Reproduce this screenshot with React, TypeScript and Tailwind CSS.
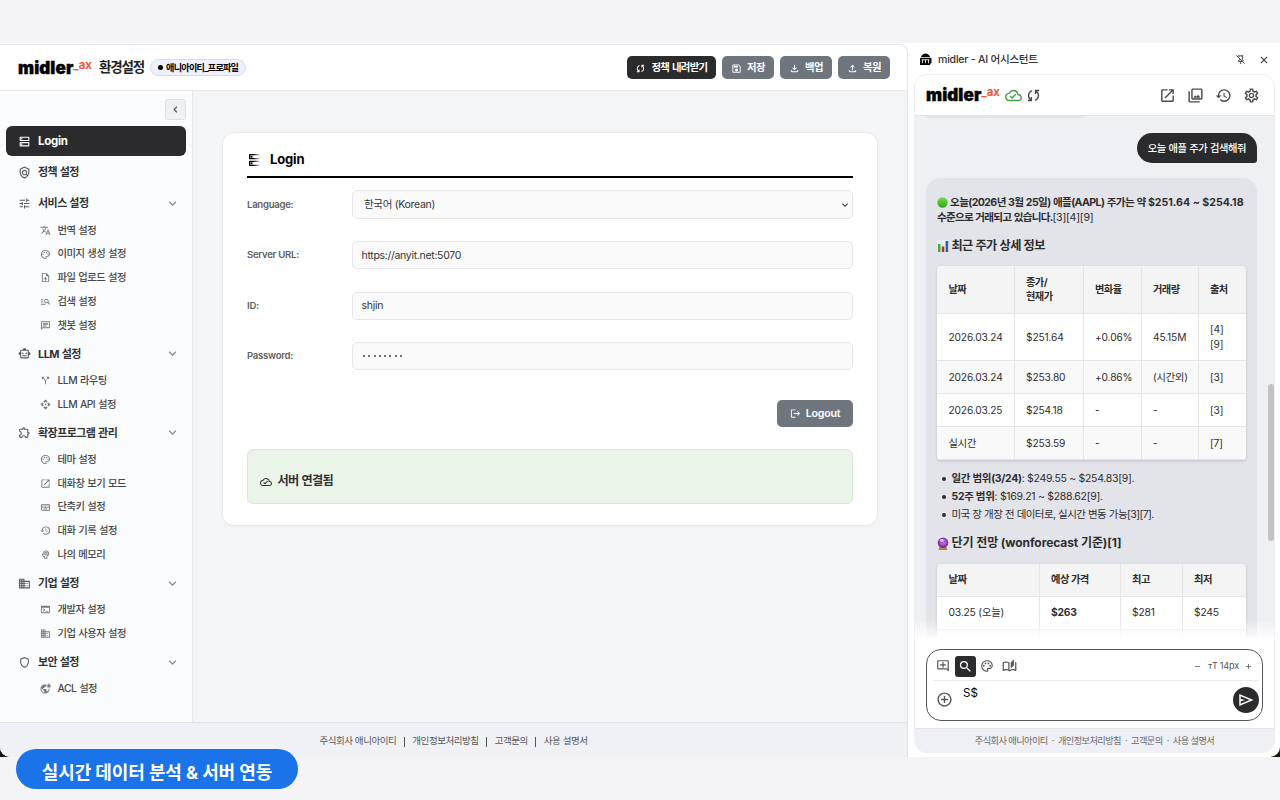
import type { ComponentType, ReactNode } from "react"
import type { IconType } from "react-icons"
import {
  MdAdd,
  MdAddCircleOutline,
  MdCallSplit,
  MdChevronLeft,
  MdClose,
  MdExpandMore,
  MdHistory,
  MdLogout,
  MdOpenInNew,
  MdOutlineAddComment,
  MdOutlineApi,
  MdOutlineAutoStories,
  MdOutlineBusiness,
  MdOutlineChat,
  MdOutlineCloudDone,
  MdOutlineCollections,
  MdOutlineDns,
  MdOutlineExtension,
  MdOutlineFileDownload,
  MdOutlineFileUpload,
  MdOutlineKeyboard,
  MdOutlineManageSearch,
  MdOutlineNoteAdd,
  MdOutlinePalette,
  MdOutlinePolicy,
  MdOutlinePsychology,
  MdOutlineSave,
  MdOutlineSettings,
  MdOutlineShield,
  MdOutlineSmartToy,
  MdOutlineTerminal,
  MdOutlineVpnLock,
  MdRemove,
  MdSearch,
  MdTranslate,
  MdTune,
} from "react-icons/md"

type Glyph = IconType | ComponentType<{ className?: string }>

function SyncIcon({ className }: { className?: string }) {
  return (
    <svg viewBox="0 -960 960 960" fill="currentColor" className={className}>
      <path d="M160-160v-80h110l-16-14q-52-46-73-105t-21-119q0-111 66.5-197.5T400-790v84q-72 26-116 88.5T240-478q0 45 17 87.5t53 78.5l10 10v-98h80v240H160Zm400-10v-84q72-26 116-88.5T720-482q0-45-17-87.5T650-648l-10-10v98h-80v-240h240v80H690l16 14q49 49 71.5 106.5T800-482q0 111-66.5 197.5T560-170Z" />
    </svg>
  )
}

function SendIcon({ className }: { className?: string }) {
  return (
    <svg viewBox="0 -960 960 960" fill="currentColor" className={className}>
      <path d="M120-160v-640l760 320-760 320Zm80-120 474-200-474-200v140l240 60-240 60v140Z" />
    </svg>
  )
}

function PinOffIcon({ className }: { className?: string }) {
  return (
    <svg viewBox="0 0 24 24" fill="none" stroke="currentColor" strokeWidth="2" className={className}>
      <path d="M7 4h11M9 4v2M16 4v8l2 3v1M10 10v2l-3 4h9M12.5 16v6M3 3l18 18" />
    </svg>
  )
}

function AppIcon({ className }: { className?: string }) {
  return (
    <svg viewBox="0 0 24 24" className={className}>
      <path d="M3 8C5 3.500 8.500 1 12 1s7 2.500 9 7z" fill="#000" />
      <path d="M2 9h21v8l-3 5H2z" fill="#000" />
      <path d="M5 12.500h14" stroke="#fff" strokeWidth="1.500" />
      <path d="M6.500 12v7M12 12v7M17.500 12v7" stroke="#fff" strokeWidth="1.500" />
    </svg>
  )
}

function GreenDot() {
  return (
    <svg viewBox="0 0 12 12" className="mr-[2px] inline-block size-[11px] align-[-1.5px]">
      <defs>
        <linearGradient id="dot" x1="0" y1="0" x2="0" y2="1">
          <stop offset="0" stopColor="#6fdc4b" />
          <stop offset="1" stopColor="#35a51b" />
        </linearGradient>
      </defs>
      <circle cx="6" cy="6" r="5.600" fill="url(#dot)" />
    </svg>
  )
}

function BarsEmoji() {
  return (
    <svg viewBox="0 0 12 12" className="size-3 shrink-0">
      <path d="M0 0h12v12H0z" fill="#e4edf2" />
      <path d="M1 4h2.500v8H1z" fill="#3fae35" />
      <path d="M4.800 6.500h2.500V12H4.800z" fill="#c8281e" />
      <path d="M8.600 1h2.600v11H8.600z" fill="#2461c4" />
    </svg>
  )
}

function CrystalBall() {
  return (
    <svg viewBox="0 0 12 13" className="h-[13px] w-3 shrink-0">
      <path d="M2.500 10h7l1 3h-9z" fill="#b9802f" />
      <circle cx="6" cy="5.700" r="5.300" fill="#7c35a3" />
      <circle cx="6" cy="5" r="3.600" fill="#a858c9" />
      <ellipse cx="4.800" cy="3.500" rx="2" ry="1.400" fill="#e3b6f0" />
      <path d="M6 6.500c1-.8 2-.4 2.500.5" stroke="#d88fe8" strokeWidth=".7" fill="none" />
    </svg>
  )
}

const menu: { label: string; icon: Glyph; items: { label: string; icon: Glyph }[] }[] = [
  {
    label: "서비스 설정",
    icon: MdTune,
    items: [
      { label: "번역 설정", icon: MdTranslate },
      { label: "이미지 생성 설정", icon: MdOutlinePalette },
      { label: "파일 업로드 설정", icon: MdOutlineNoteAdd },
      { label: "검색 설정", icon: MdOutlineManageSearch },
      { label: "챗봇 설정", icon: MdOutlineChat },
    ],
  },
  {
    label: "LLM 설정",
    icon: MdOutlineSmartToy,
    items: [
      { label: "LLM 라우팅", icon: MdCallSplit },
      { label: "LLM API 설정", icon: MdOutlineApi },
    ],
  },
  {
    label: "확장프로그램 관리",
    icon: MdOutlineExtension,
    items: [
      { label: "테마 설정", icon: MdOutlinePalette },
      { label: "대화창 보기 모드", icon: MdOpenInNew },
      { label: "단축키 설정", icon: MdOutlineKeyboard },
      { label: "대화 기록 설정", icon: MdHistory },
      { label: "나의 메모리", icon: MdOutlinePsychology },
    ],
  },
  {
    label: "기업 설정",
    icon: MdOutlineBusiness,
    items: [
      { label: "개발자 설정", icon: MdOutlineTerminal },
      { label: "기업 사용자 설정", icon: MdOutlineBusiness },
    ],
  },
  {
    label: "보안 설정",
    icon: MdOutlineShield,
    items: [{ label: "ACL 설정", icon: MdOutlineVpnLock }],
  },
]

const headerButtons = [
  { label: "정책 내려받기", icon: SyncIcon, className: "w-[89px] bg-[#2b2b2d]" },
  { label: "저장", icon: MdOutlineSave, className: "w-[52px] bg-[#6f757d]" },
  { label: "백업", icon: MdOutlineFileDownload, className: "w-[52px] bg-[#6f757d]" },
  { label: "복원", icon: MdOutlineFileUpload, className: "w-[52px] bg-[#6f757d]" },
]

const priceRows = [
  { cells: ["2026.03.24", "$251.64", "+0.06%", "45.15M", "[4] [9]"], className: "h-[47.5px] bg-white" },
  { cells: ["2026.03.24", "$253.80", "+0.86%", "(시간외)", "[3]"], className: "h-[33px] bg-[#f9f9f9]" },
  { cells: ["2026.03.25", "$254.18", "-", "-", "[3]"], className: "h-[33px] bg-white" },
  { cells: ["실시간", "$253.59", "-", "-", "[7]"], className: "h-[33px] bg-[#f9f9f9]" },
]

const links = ["주식회사 애니아이티", "개인정보처리방침", "고객문의", "사용 설명서"]

function Logo() {
  return (
    <div className="flex items-start pt-px text-black">
      <span className="text-[17px] leading-[23px] font-black tracking-[0.1px] [-webkit-text-stroke:0.4px_black]">midler</span>
      <span className="text-[11.500px] leading-[17px] font-semibold text-[#f0563a] [-webkit-text-stroke:0.2px_#f0563a]">_ax</span>
    </div>
  )
}

function Sidebar() {
  return (
    <aside className="w-[193px] shrink-0 border-r border-[#e6e8eb] bg-[#fbfcfe] px-1.5 pt-2">
      <div className="flex justify-end">
        <button className="flex h-[21px] w-[21px] items-center justify-center rounded-[3px] border border-[#dfe1e5] bg-[#f0f1f4] text-[#444]">
          <MdChevronLeft className="size-[13px]" />
        </button>
      </div>
      <nav className="mt-1.5 text-[11px] tracking-[-0.55px] [word-spacing:0.6px] text-[#333]">
        <div className="flex h-[30px] items-center rounded-md bg-[#2b2b2d] pl-3 font-bold text-white">
          <MdOutlineDns className="mr-[7px] size-[13px]" />
          <span className="pt-0.5 text-[11.500px] tracking-[-0.3px]">Login</span>
        </div>
        <div className="mt-0.5 flex h-[29px] items-center pl-3 font-bold">
          <MdOutlinePolicy className="mr-[7px] size-[13px] text-[#5c5c5c]" />
          정책 설정
        </div>
        {menu.map(({ label, icon: Icon, items }) => (
          <div key={label} className="mt-0.5">
            <div className="flex h-[29px] items-center pr-[6px] pl-3 font-bold">
              <Icon className="mr-[7px] size-[13px] text-[#5c5c5c]" />
              {label}
              <MdExpandMore className="ml-auto size-[15px] text-[#888]" />
            </div>
            <div className="pt-[0.5px] text-[10.3px] font-medium tracking-[-0.5px] text-[#484848]">
              {items.map(({ label: text, icon: ItemIcon }) => (
                <div key={text} className="flex h-[23.75px] items-center pl-[34px]">
                  <ItemIcon className="mr-[6.500px] size-[11px] text-[#7a7a7a]" />
                  {text}
                </div>
              ))}
            </div>
          </div>
        ))}
      </nav>
    </aside>
  )
}

function Field({ label, className, children }: { label: string; className: string; children: ReactNode }) {
  return (
    <div className="flex items-center">
      <label className="w-[105px] pt-px text-[9.600px] font-semibold tracking-[-0.28px] text-[#606060]">{label}</label>
      <div className={`flex flex-1 items-center rounded-[5px] border border-[#e6e6e6] bg-[#fafafa] text-[10.500px] tracking-[-0.3px] text-[#333] ${className}`}>
        {children}
      </div>
    </div>
  )
}

function LoginCard() {
  return (
    <section className="h-[394px] w-[656px] rounded-xl border border-[#e7e9ec] bg-white px-6 shadow-[0_1px_3px_rgba(0,0,0,0.03)]">
      <h2 className="flex h-[45px] items-center border-b-2 border-black pt-2.5 text-[13px] font-bold tracking-[-0.15px] text-black">
        <span className="mr-[7px] inline-flex [mask-image:linear-gradient(to_right,black_40%,transparent_85%)]">
          <MdOutlineDns className="size-4" />
        </span>
        Login
      </h2>
      <div className="mt-3 flex flex-col">
        <Field label="Language:" className="h-[29px] justify-between pr-px pl-[11px]">
          <span>한국어 (Korean)</span>
          <MdExpandMore className="size-3" />
        </Field>
        <div className="mt-[22px] flex flex-col gap-[22.5px]">
          <Field label="Server URL:" className="h-7 pt-px pl-[8.500px]">https://anyit.net:5070</Field>
          <Field label="ID:" className="h-7 pl-[8.500px]">shjin</Field>
          <Field label="Password:" className="h-7 pl-[9px]">
            <span className="flex gap-[3.300px] pl-px">
              {Array.from({ length: 8 }, (_, i) => (
                <span key={i} className="size-0.5 rounded-full bg-[#444]" />
              ))}
            </span>
          </Field>
        </div>
      </div>
      <div className="mt-[30px] flex justify-end">
        <button className="flex h-[27px] w-[76px] items-center justify-center gap-[5px] rounded-[5px] bg-[#6f757d] text-[10.600px] font-semibold tracking-[-0.2px] text-white">
          <MdLogout className="size-[11px]" />
          Logout
        </button>
      </div>
      <div className="mt-[22px] flex h-[55px] items-center rounded-md border border-[#d5ead5] bg-[#eaf4e9] pt-2.5 pl-[11.500px] text-[12.200px] font-bold tracking-[-0.7px] [word-spacing:0.8px] text-[#333]">
        <MdOutlineCloudDone className="mr-[6px] size-3" />
        서버 연결됨
      </div>
    </section>
  )
}

function SettingsWindow() {
  return (
    <div className="mt-px flex h-[713px] w-[908px] shrink-0 flex-col overflow-hidden rounded-tr-lg rounded-bl-[10px] border-t border-r border-[#e2e3e6] bg-white">
      <header className="flex h-[46px] shrink-0 items-center border-b border-[#e6e8eb] pr-[17px] pl-[18px]">
        <Logo />
        <h1 className="ml-[7px] text-[13.500px] font-bold tracking-[-1.1px] text-[#222]">환경설정</h1>
        <div className="ml-[6px] flex h-[17px] w-24 items-center justify-center gap-[3px] rounded-full border border-[#d8d6f8] bg-[#efeffd] text-[9.100px] font-bold tracking-[-0.75px] whitespace-nowrap text-black">
          <span className="size-[5px] rounded-full bg-black" />
          애니아이티_프로파일
        </div>
        <div className="ml-auto flex gap-1.5">
          {headerButtons.map(({ label, icon: Icon, className }) => (
            <button key={label} className={`flex h-[23px] items-center justify-center gap-[5px] rounded-[5px] text-[10.400px] font-bold tracking-[-0.65px] [word-spacing:0.8px] whitespace-nowrap text-white ${className}`}>
              <Icon className="mt-0.5 size-[11px]" />
              {label}
            </button>
          ))}
        </div>
      </header>
      <div className="flex min-h-0 flex-1">
        <Sidebar />
        <main className="flex-1 bg-[#f4f5f7] pt-[41px] pl-[29px]">
          <LoginCard />
        </main>
      </div>
      <footer className="flex h-[35px] shrink-0 items-center justify-center border-t border-[#e0e2e6] bg-[#f0f1f5] pt-[3px] text-[9.500px] tracking-[-0.45px] text-[#555]">
        {links.map((link, i) => (
          <span key={link} className="flex items-center">
            {i > 0 && <span className="mx-[7.500px] h-[10px] w-px bg-[#555]" />}
            {link}
          </span>
        ))}
      </footer>
    </div>
  )
}

const cell = "border-r border-b border-[#e5e5e5] pl-[11.500px] last:border-r-0"

function ChatMessages() {
  return (
    <div className="relative h-[524px] overflow-hidden bg-[#eff0f4] pr-[17px] pl-[11px]">
      <div className="h-0.5 w-[158px] rounded-b-full bg-[#e3e4e9]" />
      <div className="mt-[15px] ml-auto flex h-[30px] w-[120px] items-center justify-center rounded-[15px] rounded-br-[3px] bg-[#2b2b2d] pt-px text-[10.300px] font-medium tracking-[-0.45px] [word-spacing:0.4px] text-white">
        오늘 애플 주가 검색해줘
      </div>
      <div className="mt-[15px] h-[500px] rounded-t-[14px] bg-[#e3e4e9] px-[11px] pt-[18px] text-[10.600px] text-[#2d2d2d]">
        <p className="leading-[14.600px] whitespace-nowrap">
          <GreenDot />
          <b className="tracking-[-0.6px] [word-spacing:0.4px]">오늘(2026년 3월 25일) 애플(AAPL) 주가는 약 </b>
          <b>$251.64 ~ $254.18</b>
          <br />
          <b className="tracking-[-0.75px] [word-spacing:0.6px]">수준으로 거래되고 있습니다.</b>
          <span className="tracking-[-0.25px]">[3][4][9]</span>
        </p>
        <h3 className="mt-[12px] flex h-[18px] items-center gap-[2.500px] text-[12.200px] font-bold tracking-[-0.6px] [word-spacing:0.5px]">
          <BarsEmoji />
          최근 주가 상세 정보
        </h3>
        <div className="mt-[11px] overflow-hidden rounded-[4px] shadow-[0_1px_3px_rgba(0,0,0,0.15)]">
          <table className="w-full table-fixed border-separate border-spacing-0 text-[10.200px] leading-[14.500px] tracking-[-0.15px]">
            <colgroup>
              <col className="w-[77.500px]" />
              <col className="w-[69px]" />
              <col className="w-[58px]" />
              <col className="w-[57px]" />
              <col />
            </colgroup>
            <thead>
              <tr className="h-[47.500px] bg-[#f4f4f4] text-left tracking-[-0.5px]">
                <th className={cell}>날짜</th>
                <th className={cell}>종가/<br />현재가</th>
                <th className={cell}>변화율</th>
                <th className={cell}>거래량</th>
                <th className={cell}>출처</th>
              </tr>
            </thead>
            <tbody>
              {priceRows.map((row, i) => (
                <tr key={i} className={row.className}>
                  {row.cells.map((text, j) => (
                    <td key={j} className={`${cell} ${j === 4 ? "pr-[11px]" : "whitespace-nowrap"}`}>{text}</td>
                  ))}
                </tr>
              ))}
            </tbody>
          </table>
        </div>
        <ul className="mt-[10px] text-[10.500px] leading-[18px]">
          {[
            { head: "일간 범위(3/24)", rest: ": $249.55 ~ $254.83[9].", className: "tracking-[-0.3px]" },
            { head: "52주 범위", rest: ": $169.21 ~ $288.62[9].", className: "tracking-[-0.3px]" },
            { head: "", rest: "미국 장 개장 전 데이터로, 실시간 변동 가능[3][7].", className: "tracking-[-0.58px] [word-spacing:0.3px]" },
          ].map((item) => (
            <li key={item.rest} className="flex items-center pl-[5px] whitespace-nowrap">
              <span className="mr-[6px] size-[3.500px] rounded-full bg-[#2d2d2d]" />
              <span className={item.className}><b>{item.head}</b>{item.rest}</span>
            </li>
          ))}
        </ul>
        <h3 className="mt-[10px] flex h-[18px] items-center text-[12px] font-bold tracking-[-0.08px]">
          <CrystalBall />
          <span className="ml-[2.500px]">단기 전망 (wonforecast 기준)[1]</span>
        </h3>
        <div className="mt-3 overflow-hidden rounded-t-[4px] shadow-[0_1px_3px_rgba(0,0,0,0.15)]">
          <table className="w-full table-fixed border-separate border-spacing-0 text-[10.300px] tracking-[-0.2px]">
            <colgroup>
              <col className="w-[102.500px]" />
              <col className="w-[81px]" />
              <col className="w-[62px]" />
              <col />
            </colgroup>
            <tbody>
              <tr className="h-[33px] bg-[#f4f4f4] text-left tracking-[-0.5px]">
                <th className={cell}>날짜</th>
                <th className={cell}>예상 가격</th>
                <th className={cell}>최고</th>
                <th className={cell}>최저</th>
              </tr>
              <tr className="h-[33px] bg-white">
                <td className={cell}>03.25 (오늘)</td>
                <td className={`${cell} font-bold`}>$263</td>
                <td className={cell}>$281</td>
                <td className={cell}>$245</td>
              </tr>
              <tr className="h-[33px] bg-[#f9f9f9]">
                <td className={cell} />
                <td className={cell} />
                <td className={cell} />
                <td className={cell} />
              </tr>
            </tbody>
          </table>
        </div>
      </div>
      <div className="absolute inset-x-0 bottom-0 h-5 bg-linear-to-b from-white/0 to-white" />
      <div className="absolute top-[268px] right-0 h-[157px] w-1.5 rounded-full bg-[#c2c2c4]" />
    </div>
  )
}

function Composer() {
  return (
    <div className="mx-[11px] mt-[9px] h-[72px] w-[337px] rounded-[15px] border border-[#55565a] bg-white pr-[3px] pl-[6px] text-[#555]">
      <div className="flex h-[31px] items-center border-b border-[#ececef] pt-0.5 pr-[6px] pl-[3px]">
        <MdOutlineAddComment className="size-[14px]" />
        <span className="ml-[4.500px] flex size-[21px] items-center justify-center rounded-[3px] bg-[#2b2b2d] text-white">
          <MdSearch className="size-[15px]" />
        </span>
        <MdOutlinePalette className="ml-[4.500px] size-[14px]" />
        <MdOutlineAutoStories className="ml-[8px] size-[15px]" />
        <MdRemove className="ml-auto size-[9px]" />
        <span className="ml-[6px] text-[9.200px] tracking-[-0.2px]">
          <span className="text-[6.500px] font-semibold">T</span>
          <span className="mr-0.5 text-[9px]">T</span>
          14px
        </span>
        <MdAdd className="ml-[5px] size-[9px]" />
      </div>
      <div className="flex items-center pt-1 pl-[3px]">
        <MdAddCircleOutline className="size-[17px]" />
        <span className="mb-3 ml-[10px] text-[11.5px] text-black">S$</span>
        <span className="ml-auto flex size-[26px] items-center justify-center rounded-full bg-[#2b2b2d] text-white">
          <SendIcon className="size-[18px]" />
        </span>
      </div>
    </div>
  )
}

function AssistantPanel() {
  return (
    <div className="flex h-[714px] flex-1 flex-col overflow-hidden rounded-br-[10px] bg-white px-1.5">
      <div className="flex h-[31px] shrink-0 items-center pt-0.5 pr-1 pl-[5px] text-[#333]">
        <AppIcon className="size-[13px]" />
        <span className="ml-[6px] text-[10.600px] font-medium tracking-[-0.25px]">midler - AI 어시스턴트</span>
        <PinOffIcon className="ml-auto size-[11px]" />
        <MdClose className="ml-3 size-3" />
      </div>
      <div className="flex h-[679px] w-[361px] flex-col overflow-hidden rounded-[12px] border border-[#eeeff3]">
        <header className="flex h-[41px] shrink-0 items-center border-b border-[#e3e4e7] px-[11px] text-[#4a4a4a]">
          <Logo />
          <MdOutlineCloudDone className="ml-[5.500px] size-[17px] text-[#43a047]" />
          <SyncIcon className="ml-[2.500px] size-[17px]" />
          <div className="ml-auto flex gap-[11px] pr-[3px]">
            <MdOpenInNew className="size-[17px]" />
            <MdOutlineCollections className="size-[17px]" />
            <MdHistory className="size-[17px]" />
            <MdOutlineSettings className="size-[17px]" />
          </div>
        </header>
        <ChatMessages />
        <Composer />
        <footer className="mt-[7px] flex flex-1 items-center justify-center border-t border-[#e3e4e9] bg-[#eff0f5] pt-px text-[9.200px] tracking-[-0.57px] text-[#666]">
          {links.map((link, i) => (
            <span key={link} className="whitespace-pre">
              {i > 0 && "  ·  "}
              {link}
            </span>
          ))}
        </footer>
      </div>
    </div>
  )
}

export default function App() {
  return (
    <div className="relative h-[800px] w-[1280px] overflow-hidden bg-[#f4f4f6] pt-[43px] font-['Inter','Noto_Sans_CJK_KR',sans-serif]">
      <div className="flex h-[714px] bg-[linear-gradient(to_bottom,white_50%,#10140c_50%)]">
        <SettingsWindow />
        <AssistantPanel />
      </div>
      <div className="absolute top-[749px] left-4 flex h-10 w-[282px] items-center justify-center rounded-full bg-[#1a73e8] pt-1.5 text-[18px] font-bold tracking-[-0.1px] whitespace-nowrap text-white">
        실시간 데이터 분석 &amp; 서버 연동
      </div>
    </div>
  )
}
